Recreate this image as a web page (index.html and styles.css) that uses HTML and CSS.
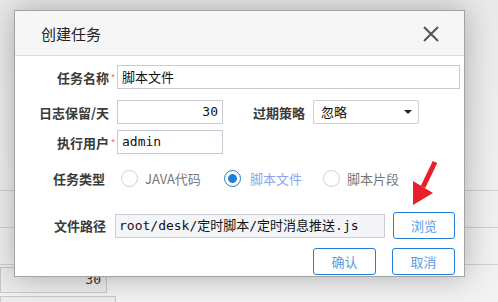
FILE: index.html
```html
<!DOCTYPE html>
<html>
<head>
<meta charset="utf-8">
<title>创建任务</title>
<link rel="stylesheet" href="styles.css">
</head>
<body>
<div class="page">
  <div class="grid-bg">
    <div class="bg-row"></div>
    <div class="bg-row"></div>
    <div class="bg-row bg-row-last">
      <div class="bg-cell">30</div>
      <div class="bg-cell bg-cell-wide"></div>
    </div>
  </div>

  <div class="dialog">
    <div class="dialog-head">
      <span class="dialog-title">创建任务</span>
      <svg class="close" width="16" height="16" viewBox="0 0 16 16">
        <path d="M1 1 L15 15 M15 1 L1 15" stroke="#555" stroke-width="2" fill="none"/>
      </svg>
    </div>

    <div class="form">
      <div class="row row-1">
        <label class="lbl">任务名称</label><span class="req">*</span>
        <div class="field field-name">脚本文件</div>
      </div>
      <div class="row row-2">
        <label class="lbl">日志保留/天</label><span class="req"></span>
        <div class="field field-short mono num">30</div>
        <label class="lbl lbl-2">过期策略</label>
        <div class="select">忽略<span class="caret"></span></div>
      </div>
      <div class="row row-3">
        <label class="lbl">执行用户</label><span class="req">*</span>
        <div class="field field-short mono">admin</div>
      </div>
      <div class="row row-4">
        <label class="lbl lbl-type">任务类型</label>
        <div class="radios">
          <span class="opt opt-1"><span class="dot"></span>JAVA代码</span>
          <span class="opt opt-2 on"><span class="dot"></span>脚本文件</span>
          <span class="opt"><span class="dot"></span>脚本片段</span>
        </div>
      </div>
      <div class="row row-5">
        <label class="lbl lbl-path">文件路径</label>
        <div class="field field-path mono">root/desk/定时脚本/定时消息推送.js</div>
        <button class="btn btn-browse">浏览</button>
      </div>
      <div class="row row-6">
        <button class="btn">确认</button>
        <button class="btn">取消</button>
      </div>
    </div>
  </div>

  <svg class="arrow" width="40" height="50" viewBox="0 0 40 50">
    <path d="M35 4 L23 29" stroke="#e8202a" stroke-width="5" fill="none"/>
    <polygon points="13,23 13,47 33,35" fill="#e8202a"/>
  </svg>
</div>
</body>
</html>
```

FILE: styles.css
```css
body { margin: 0; font-family: "Noto Sans CJK SC", "Noto Sans", sans-serif; font-size: 13px; color: #333; }
.page { position: relative; width: 498px; height: 302px; overflow: hidden;
  background: linear-gradient(#e9e9e9, #f2f2f2); }

/* table behind the modal */
.grid-bg { padding-top: 190px; }
.bg-row { height: 36px; border-top: 1px solid #cfcfcf; }
.bg-row-last { height: auto; border-top: 1px solid #cfcfcf; padding-top: 2px; }
.bg-cell { width: 100px; height: 24px; border: 1px solid #c8c8c8; background: #ececec;
  font-family: "DejaVu Sans Mono", monospace; text-align: right; padding-right: 5px; line-height: 24px; }
.bg-cell-wide { width: 114px; height: 20px; margin-top: 3px; padding: 0; }

/* modal */
.dialog { position: absolute; left: 14px; top: 10px; width: 451px; height: 267px; box-sizing: border-box;
  border: 1px solid #a3a3a3; background: #fff; box-shadow: 0 0 28px rgba(0,0,0,0.28); }
.dialog-head { height: 44px; background: #f6f6f6; border-bottom: 1px solid #dcdcdc;
  display: flex; align-items: center; justify-content: space-between; padding: 0 25px 0 26px; }
.dialog-title { font-size: 15px; color: #222; }
.close { display: block; margin-top: 2px; }

.form { display: flex; flex-direction: column; }
.row { display: flex; align-items: center; height: 24px; }
.row-1 { margin-top: 9px; }
.row-2 { margin-top: 11px; }
.row-3 { margin-top: 6px; }
.row-4 { margin-top: 12px; }
.row-5 { margin-top: 22px; height: 27px; }
.row-6 { margin-top: 9px; height: 27px; justify-content: flex-end; padding-right: 9px; gap: 16px; }

.lbl { width: 94px; text-align: right; font-weight: 700; color: #3a3a3a; white-space: nowrap; }
.lbl-2 { width: 82px; margin-right: 8px; }
.lbl-type { width: 90px; padding-right: 4px; }
.lbl-path { width: 91px; padding-right: 3px; margin-right: 6px; }
.req { width: 8px; text-align: center; color: #f07070; font-size: 10px; line-height: 10px; padding-top: 2px; }

.field { height: 24px; box-sizing: border-box; border: 1px solid #c9c9d3; line-height: 22px;
  padding: 0 4px; white-space: nowrap; overflow: hidden; color: #111; }
.field-name { width: 343px; }
.field-short { width: 106px; }
.field-path { width: 270px; background: #f4f5f9; padding-left: 3px; border-color: #cdcdd3; }
.mono { font-family: "DejaVu Sans Mono", "Noto Sans CJK SC", monospace; font-size: 13px; }
.num { text-align: right; }

.select { width: 106px; height: 24px; box-sizing: border-box; border: 1px solid #cfcfcf; border-radius: 2px;
  padding-left: 7px; line-height: 22px; color: #111; display: flex; align-items: center; justify-content: space-between; padding-right: 6px; }
.caret { width: 0; height: 0; border-left: 4px solid transparent; border-right: 4px solid transparent;
  border-top: 4px solid #222; }

.radios { display: flex; align-items: center; margin-left: 12px; }
.opt { display: flex; align-items: center; gap: 7px; color: #777; }
.opt-1 { width: 103px; }
.opt-2 { width: 99px; }
.dot { width: 17px; height: 17px; box-sizing: border-box; border: 1px solid #cfcfd6; border-radius: 50%; }
.opt.on { color: #8aa6ee; gap: 9px; }
.opt.on .dot { border-color: #1d7fd8; background: radial-gradient(circle, #1d7fd8 4px, #fff 4.8px); }

.btn { width: 63px; height: 27px; box-sizing: border-box; border: 1px solid #1f80d6; border-radius: 3px;
  background: #fff; color: #5b9be0; font-family: inherit; font-size: 13px; padding: 0; }
.btn-browse { width: 62px; margin-left: 8px; }

.arrow { position: absolute; left: 400px; top: 158px; }
```
